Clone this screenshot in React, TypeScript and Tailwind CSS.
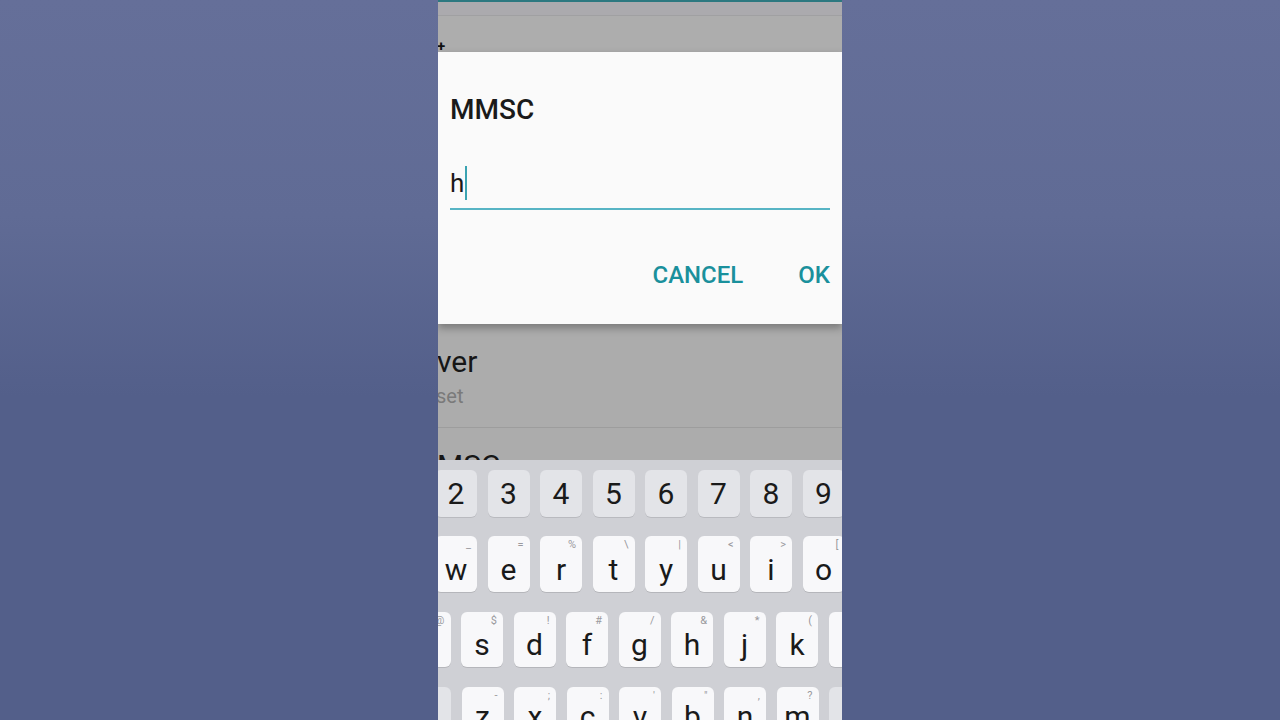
const NUMBERS = ["2", "3", "4", "5", "6", "7", "8", "9", "0"]

const TOP_ROW = [
  { key: "w", alt: "_" },
  { key: "e", alt: "=" },
  { key: "r", alt: "%" },
  { key: "t", alt: "\\" },
  { key: "y", alt: "|" },
  { key: "u", alt: "<" },
  { key: "i", alt: ">" },
  { key: "o", alt: "[" },
  { key: "p", alt: "]" },
]

const MIDDLE_ROW = [
  { key: "a", alt: "@" },
  { key: "s", alt: "$" },
  { key: "d", alt: "!" },
  { key: "f", alt: "#" },
  { key: "g", alt: "/" },
  { key: "h", alt: "&" },
  { key: "j", alt: "*" },
  { key: "k", alt: "(" },
  { key: "l", alt: ")" },
]

const BOTTOM_ROW = [
  { key: "z", alt: "-" },
  { key: "x", alt: ";" },
  { key: "c", alt: ":" },
  { key: "v", alt: "'" },
  { key: "b", alt: "\"" },
  { key: "n", alt: "," },
  { key: "m", alt: "?" },
]

type LetterKeyProps = {
  label: string
  alt: string
  height: string
  pad: string
}

const LetterKey = ({ label, alt, height, pad }: LetterKeyProps) => (
  <div
    className={`relative flex w-[42px] shrink-0 justify-center rounded-[6px] bg-[#f8f8fa] shadow-[0_1px_0_rgba(0,0,0,0.12)] ${height} ${pad}`}
  >
    <span className="absolute top-[3px] right-[6px] text-[11px] leading-none text-[#9a9a9e]">
      {alt}
    </span>
    <span className="text-[30px] leading-none text-[#1a1a1a]">{label}</span>
  </div>
)

const Keyboard = () => (
  <div className="flex shrink-0 flex-col gap-[19px] bg-[#cfd0d5] pt-[10px]">
    <div className="ml-[-3px] flex gap-[10.5px]">
      {NUMBERS.map((n) => (
        <div
          key={n}
          className="flex h-[47px] w-[42px] shrink-0 items-center justify-center rounded-[6px] bg-[#e3e4e8] shadow-[0_1px_0_rgba(0,0,0,0.1)]"
        >
          <span className="text-[30px] leading-none text-[#1a1a1a]">{n}</span>
        </div>
      ))}
    </div>

    <div className="ml-[-3px] flex gap-[10.5px]">
      {TOP_ROW.map((k) => (
        <LetterKey key={k.key} label={k.key} alt={k.alt} height="h-[56px]" pad="pt-[19px]" />
      ))}
    </div>

    <div className="mt-px ml-[-29.5px] flex gap-[10.5px]">
      {MIDDLE_ROW.map((k) => (
        <LetterKey key={k.key} label={k.key} alt={k.alt} height="h-[55px]" pad="pt-[18px]" />
      ))}
    </div>

    <div className="mt-px ml-[-59px] flex gap-[10.5px]">
      <div className="h-[55px] w-[72px] shrink-0 rounded-[6px] bg-[#e3e4e8] shadow-[0_1px_0_rgba(0,0,0,0.1)]" />
      {BOTTOM_ROW.map((k) => (
        <LetterKey key={k.key} label={k.key} alt={k.alt} height="h-[55px]" pad="pt-[15px]" />
      ))}
      <div className="h-[55px] w-[72px] shrink-0 rounded-[6px] bg-[#e3e4e8] shadow-[0_1px_0_rgba(0,0,0,0.1)]" />
    </div>
  </div>
)

const MmscDialog = () => (
  <div className="relative z-10 h-[272px] shrink-0 bg-[#fafafa] px-[12px] pt-[42px] shadow-[0_4px_8px_rgba(0,0,0,0.3)]">
    <h2 className="text-[28px] leading-[32px] font-medium text-[#1a1a1a]">MMSC</h2>

    <div className="mt-[40px] border-b-2 border-[#57b4c4] pb-[8px]">
      <div className="flex h-[34px] items-center">
        <span className="text-[26px] leading-[34px] text-[#1a1a1a]">h</span>
        <span className="ml-[1px] h-[34px] w-[2px] bg-[#3aa3b2]" />
      </div>
    </div>

    <div className="mt-[51px] flex justify-end gap-[55px]">
      <button className="text-[24px] leading-[28px] font-medium text-[#1a909c]">CANCEL</button>
      <button className="text-[24px] leading-[28px] font-medium text-[#1a909c]">OK</button>
    </div>
  </div>
)

const App = () => {
  return (
    <div className="flex h-[720px] w-[1280px] justify-center overflow-hidden bg-[linear-gradient(180deg,#656f99_0%,#606b95_30%,#535f8a_55%,#535f8a_100%)] font-['Roboto',sans-serif]">
      <div className="flex w-[404px] flex-col overflow-hidden bg-[#adadad]">
        <div className="h-[2px] shrink-0 bg-[#2c7880]" />
        <div className="h-[14px] shrink-0 border-b border-[#a0a0a2] bg-[#abaaae]" />
        <div className="flex h-[36px] shrink-0 items-end">
          <span className="relative z-20 mb-[-2px] ml-[-1px] text-[15px] leading-[15px] font-bold text-[#111]">+</span>
        </div>

        <MmscDialog />

        <div className="h-[136px] shrink-0 overflow-hidden bg-[#acacac]">
          <p className="mt-[21px] ml-[-1px] text-[30px] leading-[34px] text-[#161616]">ver</p>
          <p className="mt-[5px] ml-[-2px] text-[20px] leading-[24px] text-[#7a7a7a]">set</p>
          <div className="mt-[19px] h-px bg-[#9d9d9d]" />
          <p className="mt-[21px] ml-[-1px] text-[30px] leading-[34px] text-[#161616]">MSC</p>
        </div>

        <Keyboard />
      </div>
    </div>
  )
}

export default App
